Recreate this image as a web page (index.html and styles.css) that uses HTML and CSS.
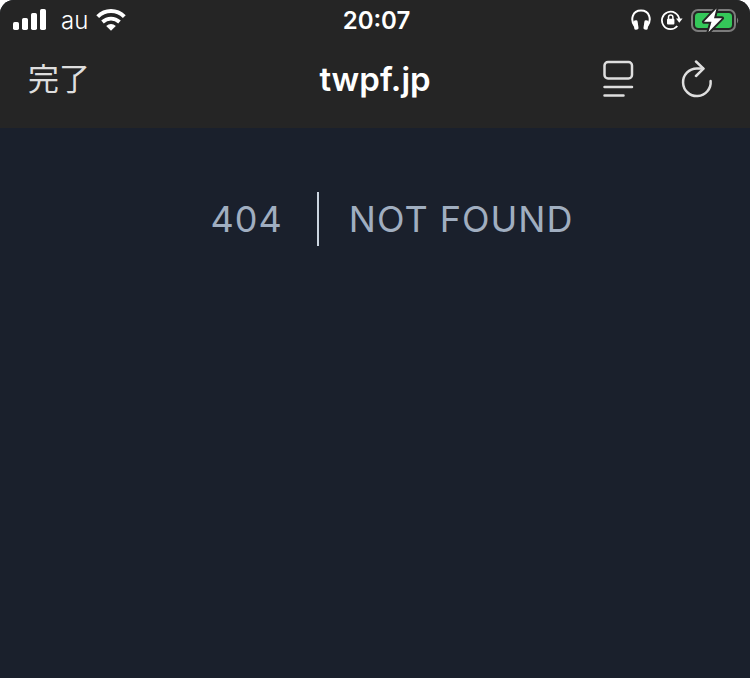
FILE: index.html
```
<!DOCTYPE html>
<html lang="ja">
<head>
<meta charset="utf-8">
<meta name="viewport" content="width=device-width, initial-scale=1">
<title>Not Found</title>
<link rel="stylesheet" href="styles.css">
</head>
<body>
<header class="browser">
  <div class="status">
    <div class="status__left">
      <svg class="signal" width="34" height="22" viewBox="0 0 34 22" aria-hidden="true">
        <rect x="0" y="13" width="6" height="8" rx="1.7"/>
        <rect x="9" y="9" width="6" height="12" rx="1.7"/>
        <rect x="18" y="4" width="6" height="17" rx="1.7"/>
        <rect x="27" y="0" width="6" height="21" rx="1.7"/>
      </svg>
      <span class="carrier">au</span>
      <svg class="wifi" width="30" height="22" viewBox="0 0 30 22" aria-hidden="true">
        <path d="M1.700 7.700C9.200 .2 20.800 .2 28.300 7.700" fill="none" stroke="#fff" stroke-width="4"/>
        <path d="M6.500 13C11.400 8.600 18.600 8.600 23.500 13" fill="none" stroke="#fff" stroke-width="3.800"/>
        <path d="M10.200 17C13 14.300 17 14.300 19.800 17L15 21.700Z"/>
      </svg>
    </div>
    <time class="clock">20:07</time>
    <div class="status__right">
      <svg class="headphones" width="20" height="22" viewBox="0 0 20 22" aria-hidden="true">
        <path d="M3.600 17C-1 10.500 1.500 1.500 10 1.500S21 10.500 16.400 17" fill="none" stroke="#fff" stroke-width="2"/>
        <rect x="2.800" y="11.300" width="4.300" height="9.400" rx="1.600" transform="rotate(-8 5 16)"/>
        <rect x="12.900" y="11.300" width="4.300" height="9.400" rx="1.600" transform="rotate(8 15 16)"/>
      </svg>
      <svg class="lock" width="22" height="22" viewBox="0 0 22 22" aria-hidden="true">
        <path d="M18.300 10.500A8.700 8.700 0 1 0 16.300 17" fill="none" stroke="#fff" stroke-width="1.800"/>
        <path d="M15 9.500H21.600L18.300 13.800Z"/>
        <rect x="6" y="9.800" width="7.400" height="5.800" rx="1"/>
        <path d="M7.500 10.500V8.300a2.200 2.200 0 0 1 4.400 0V10.500" fill="none" stroke="#fff" stroke-width="1.500"/>
      </svg>
      <svg class="battery" width="49" height="26" viewBox="0 0 49 26" aria-hidden="true">
        <rect x="1" y="3" width="43" height="21" rx="6" fill="none" stroke="#7c7c7c" stroke-width="2"/>
        <rect x="4" y="6" width="37" height="15" rx="3.500" fill="#34c759"/>
        <path d="M46 10.500q2.500 3 0 6Z" fill="#7c7c7c"/>
        <path d="M25.500 1.500L13 14.800H20.500L17.500 25L31 11.200H23Z" fill="#fff" stroke="#252525" stroke-width="4" stroke-linejoin="round" paint-order="stroke"/>
      </svg>
    </div>
  </div>
  <nav class="toolbar">
    <button class="done" type="button">完了</button>
    <h1 class="site">twpf.jp</h1>
    <div class="actions">
      <button type="button" aria-label="Reader view">
        <svg width="32" height="38" viewBox="0 0 32 38">
          <rect x="1.500" y="2" width="27.500" height="16.500" rx="3.500"/>
          <path d="M1.500 27H29M1.500 35.500H20.500"/>
        </svg>
      </button>
      <button type="button" aria-label="Reload">
        <svg width="32" height="38" viewBox="0 0 32 38">
          <path d="M29.600 21A13.800 13.800 0 1 1 15.800 8.500H22"/>
          <path d="M15 1.500L22.500 8.700L15 16"/>
        </svg>
      </button>
    </div>
  </nav>
</header>

<main class="error">
  <div class="error__code">404</div>
  <div class="error__message">NOT FOUND</div>
</main>
</body>
</html>
```

FILE: styles.css
```
* {
    box-sizing: border-box;
    margin: 0;
    padding: 0;
}

html {
    background: #fff;
}

body {
    min-height: 100vh;
    background: #1a202c;
    font-family: Inter, "Noto Sans CJK JP", sans-serif;
    border-radius: 14px 14px 0 0;
    overflow: hidden;
}

svg {
    display: block;
    fill: #fff;
}

.browser {
    background: #252525;
    color: #fff;
}

.status,
.toolbar {
    display: grid;
    grid-template-columns: 1fr auto 1fr;
    align-items: center;
}

.status {
    height: 40px;
    padding: 0 10px 0 13px;
}

.status__left,
.status__right {
    display: flex;
    align-items: center;
}

.status__right {
    justify-content: flex-end;
    gap: 10px;
}

.lock {
    margin-right: -2px;
}

.carrier {
    margin: 0 8px 0 14px;
    font-size: 24px;
    font-weight: 300;
}

.clock {
    font-size: 24px;
    font-weight: 600;
}

.toolbar {
    height: 88px;
    padding: 0 28px 10px;
}

.toolbar button {
    border: 0;
    background: none;
    color: #dedede;
    cursor: pointer;
}

.toolbar .done {
    justify-self: start;
    font-family: "Noto Sans CJK JP", sans-serif;
    font-size: 31px;
    line-height: 36px;
    padding-bottom: 4px;
}

.site {
    font-size: 33px;
    font-weight: 600;
    line-height: 40px;
}

.actions {
    display: flex;
    justify-content: flex-end;
    gap: 46px;
    padding-right: 9px;
}

.actions svg {
    fill: none;
    stroke: #dedede;
    stroke-width: 2.5;
    stroke-linecap: round;
    stroke-linejoin: round;
}

.error {
    display: flex;
    justify-content: center;
    padding-top: 64px;
    color: #a0aec0;
    font-size: 36px;
    line-height: 54px;
    letter-spacing: 1px;
}

.error__code {
    padding: 0 34px;
    border-right: 2px solid #cbd5e0;
}

.error__message {
    margin-left: 30px;
}
```
